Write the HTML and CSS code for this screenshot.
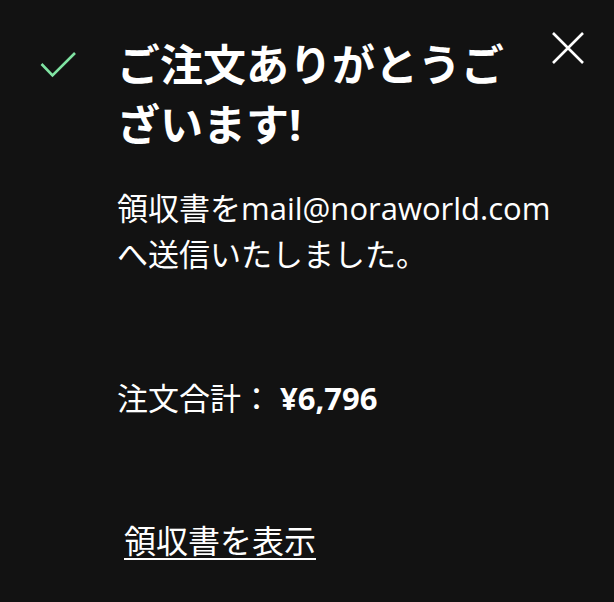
FILE: index.html
```html
<!DOCTYPE html>
<html lang="ja">
<head>
<meta charset="utf-8">
<link rel="stylesheet" href="styles.css">
</head>
<body>
<div class="dialog">
  <div class="status">
    <svg class="check" width="40" height="30" viewBox="0 0 40 30"><polyline points="1.5,13 12.5,24.5 35,2" fill="none" stroke="#7fe3a2" stroke-width="2.6"/></svg>
  </div>
  <div class="content">
    <h1 class="title">ご注文ありがとうございます!</h1>
    <p class="message">領収書をmail@noraworld.comへ送信いたしました。</p>
    <p class="total">注文合計： <strong>¥6,796</strong></p>
    <a class="receipt" href="#">領収書を表示</a>
  </div>
  <button class="close" aria-label="閉じる">
    <svg width="34" height="34" viewBox="0 0 34 34"><path d="M2 2 L32 32 M32 2 L2 32" stroke="#fff" stroke-width="2.6" fill="none"/></svg>
  </button>
</div>
</body>
</html>
```
FILE: styles.css
```css
html, body {
  margin: 0;
  padding: 0;
  background: #121212;
}
body {
  font-family: "Open Sans", "Noto Sans CJK JP", sans-serif;
  color: #fff;
  width: 614px;
  height: 602px;
  overflow: hidden;
}
.dialog {
  display: flex;
  align-items: flex-start;
}
.status {
  width: 117px;
  flex: none;
  padding-top: 51px;
  padding-left: 40px;
  box-sizing: border-box;
}
.check {
  display: block;
}
.content {
  flex: 1;
  padding-top: 35px;
  min-width: 0;
}
.title {
  margin: 0;
  font-size: 43px;
  line-height: 60px;
  font-weight: 700;
  width: 400px;
}
.message {
  margin: 30px 0 0;
  font-size: 31px;
  line-height: 46px;
  width: 440px;
}
.total {
  margin: 98px 0 0;
  font-size: 31px;
  line-height: 46px;
}
.total strong {
  font-weight: 700;
}
.receipt {
  display: inline-block;
  margin: 97px 0 0 7px;
  font-size: 32px;
  line-height: 46px;
  color: #fff;
  text-decoration: underline;
  text-underline-offset: 5px;
  text-decoration-thickness: 2px;
}
.close {
  flex: none;
  background: none;
  border: 0;
  padding: 0;
  margin: 31px 29px 0 0;
  cursor: pointer;
}
.close svg {
  display: block;
}
```
